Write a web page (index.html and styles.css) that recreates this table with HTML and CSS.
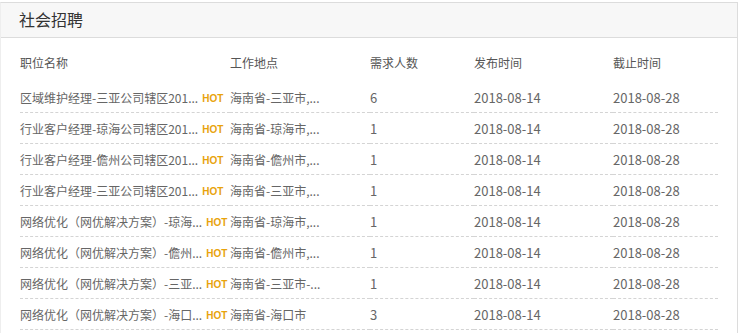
FILE: index.html
```html
<!DOCTYPE html>
<html lang="zh-CN">
<head>
<meta charset="utf-8">
<title>社会招聘</title>
<link rel="stylesheet" href="styles.css">
</head>
<body>
<div class="panel">
  <div class="panel-head">社会招聘</div>
  <table class="jobs">
    <colgroup>
      <col class="c-name"><col class="c-loc"><col class="c-num"><col class="c-pub"><col class="c-end">
    </colgroup>
    <thead>
      <tr><th>职位名称</th><th>工作地点</th><th>需求人数</th><th>发布时间</th><th>截止时间</th></tr>
    </thead>
    <tbody>
      <tr><td class="cjk"><span class="name">区域维护经理-三亚公司辖区201...</span><span class="hot">HOT</span></td><td class="cjk">海南省-三亚市,...</td><td>6</td><td>2018-08-14</td><td>2018-08-28</td></tr>
      <tr><td class="cjk"><span class="name">行业客户经理-琼海公司辖区201...</span><span class="hot">HOT</span></td><td class="cjk">海南省-琼海市,...</td><td>1</td><td>2018-08-14</td><td>2018-08-28</td></tr>
      <tr><td class="cjk"><span class="name">行业客户经理-儋州公司辖区201...</span><span class="hot">HOT</span></td><td class="cjk">海南省-儋州市,...</td><td>1</td><td>2018-08-14</td><td>2018-08-28</td></tr>
      <tr><td class="cjk"><span class="name">行业客户经理-三亚公司辖区201...</span><span class="hot">HOT</span></td><td class="cjk">海南省-三亚市,...</td><td>1</td><td>2018-08-14</td><td>2018-08-28</td></tr>
      <tr><td class="cjk"><span class="name">网络优化（网优解决方案）-琼海...</span><span class="hot">HOT</span></td><td class="cjk">海南省-琼海市,...</td><td>1</td><td>2018-08-14</td><td>2018-08-28</td></tr>
      <tr><td class="cjk"><span class="name">网络优化（网优解决方案）-儋州...</span><span class="hot">HOT</span></td><td class="cjk">海南省-儋州市,...</td><td>1</td><td>2018-08-14</td><td>2018-08-28</td></tr>
      <tr><td class="cjk"><span class="name">网络优化（网优解决方案）-三亚...</span><span class="hot">HOT</span></td><td class="cjk">海南省-三亚市-...</td><td>1</td><td>2018-08-14</td><td>2018-08-28</td></tr>
      <tr><td class="cjk"><span class="name">网络优化（网优解决方案）-海口...</span><span class="hot">HOT</span></td><td class="cjk">海南省-海口市</td><td>3</td><td>2018-08-14</td><td>2018-08-28</td></tr>
    </tbody>
  </table>
</div>
</body>
</html>
```
FILE: styles.css
```css
html, body {
  margin: 0;
  padding: 0;
  background: #fff;
}
body {
  font-family: "Noto Sans CJK SC", "Noto Sans", sans-serif;
  color: #666;
  overflow: hidden;
}
.panel {
  margin-top: 2px;
  width: 736px;
  border: 1px solid #dcdcdc;
  border-left-color: #eee;
  border-bottom: none;
  height: 340px;
}
.panel-head {
  height: 34px;
  line-height: 33px;
  padding-left: 18px;
  font-size: 16px;
  color: #333;
  background: #f7f7f7;
  border-bottom: 1px solid #dcdcdc;
}
.jobs {
  margin: 4px 0 0 19px;
  width: 698px;
  border-collapse: collapse;
  table-layout: fixed;
  font-size: 13px;
}
.c-name { width: 210px; }
.c-loc { width: 140px; }
.c-num { width: 104px; }
.c-pub { width: 139px; }
.c-end { width: 105px; }
.jobs th {
  height: 40px;
  padding: 0;
  text-align: left;
  font-weight: normal;
  font-size: 12px;
  color: #555;
}
.jobs td {
  height: 30px;
  padding: 0;
  white-space: nowrap;
  border-bottom: 1px dashed #d4d4d4;
}
.jobs td.cjk {
  font-size: 12px;
}
.name {
  vertical-align: middle;
}
.hot {
  display: inline-block;
  vertical-align: middle;
  margin-left: 4px;
  font-family: "Liberation Sans", Arial, sans-serif;
  font-weight: bold;
  font-size: 10px;
  color: #e8a30c;
}
```
